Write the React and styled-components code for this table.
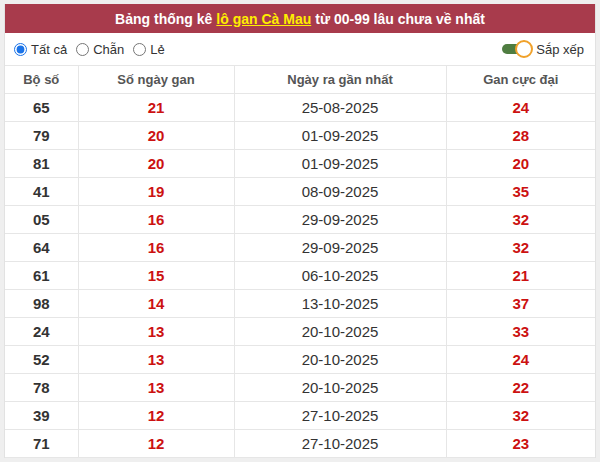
import React from 'react';
import styled, { createGlobalStyle } from 'styled-components';

const GlobalStyle = createGlobalStyle`
  body {
    margin: 0;
    background: #efefef;
    font-family: "Liberation Sans", Arial, sans-serif;
  }
`;

const rows = [
  ['65', 21, '25-08-2025', 24],
  ['79', 20, '01-09-2025', 28],
  ['81', 20, '01-09-2025', 20],
  ['41', 19, '08-09-2025', 35],
  ['05', 16, '29-09-2025', 32],
  ['64', 16, '29-09-2025', 32],
  ['61', 15, '06-10-2025', 21],
  ['98', 14, '13-10-2025', 37],
  ['24', 13, '20-10-2025', 33],
  ['52', 13, '20-10-2025', 24],
  ['78', 13, '20-10-2025', 22],
  ['39', 12, '27-10-2025', 32],
  ['71', 12, '27-10-2025', 23],
];

const Box = styled.div`
  margin: 4px 4px 0;
  background: #fff;
  border: 1px solid #e2e2e2;
  border-top: none;
  border-bottom: none;
`;

const Title = styled.h3`
  margin: 0;
  height: 29px;
  background: #a83b4c;
  color: #fff;
  font-size: 14px;
  font-weight: bold;
  display: flex;
  align-items: center;
  justify-content: center;
  gap: 4px;
  a {
    color: #ffee00;
    text-decoration: underline;
  }
`;

const Options = styled.div`
  height: 32px;
  display: flex;
  align-items: center;
  justify-content: space-between;
  padding: 0 10px 0 9px;
  font-size: 13px;
  color: #333;
`;

const RadioGroup = styled.div`
  display: flex;
  align-items: center;
  gap: 9px;
`;

const RadioLabel = styled.label`
  display: flex;
  align-items: center;
  gap: 4px;
  input {
    margin: 0;
    width: 13px;
    height: 13px;
    accent-color: #1a73e8;
  }
`;

const ToggleWrap = styled.div`
  display: flex;
  align-items: center;
  gap: 4px;
  margin-right: 1px;
`;

const Track = styled.span`
  position: relative;
  display: inline-block;
  width: 24px;
  height: 10px;
  border-radius: 5px;
  background: #4f7d41;
  margin-right: 6px;
`;

const Knob = styled.span`
  position: absolute;
  right: -7px;
  top: -4px;
  width: 14px;
  height: 14px;
  border-radius: 50%;
  background: #fff;
  border: 2px solid #f0a12a;
`;

const Table = styled.table`
  width: 100%;
  border-collapse: collapse;
  font-size: 15px;
  color: #333;
  th, td {
    border: 1px solid #e6e6e6;
    text-align: center;
    height: 27px;
    padding: 0;
  }
  tr > :first-child { border-left: none; }
  tr > :last-child { border-right: none; }
  th {
    font-size: 13px;
    font-weight: bold;
    color: #555;
  }
`;

const Cell = styled.td`
  font-weight: ${(p) => (p.$bold ? 'bold' : 'normal')};
  color: ${(p) => (p.$red ? '#cc1111' : '#333')};
`;

export default function App() {
  return (
    <>
      <GlobalStyle />
      <Box>
        <Title>
          Bảng thống kê <a>lô gan Cà Mau</a> từ 00-99 lâu chưa về nhất
        </Title>
        <Options>
          <RadioGroup>
            <RadioLabel><input type="radio" name="f" defaultChecked /> Tất cả</RadioLabel>
            <RadioLabel><input type="radio" name="f" /> Chẵn</RadioLabel>
            <RadioLabel><input type="radio" name="f" /> Lẻ</RadioLabel>
          </RadioGroup>
          <ToggleWrap>
            <Track><Knob /></Track>
            Sắp xếp
          </ToggleWrap>
        </Options>
        <Table>
          <colgroup>
            <col style={{ width: 73 }} />
            <col style={{ width: 156 }} />
            <col style={{ width: 212 }} />
            <col />
          </colgroup>
          <thead>
            <tr>
              <th>Bộ số</th>
              <th>Số ngày gan</th>
              <th>Ngày ra gần nhất</th>
              <th>Gan cực đại</th>
            </tr>
          </thead>
          <tbody>
            {rows.map(([n, gan, date, max]) => (
              <tr key={n}>
                <Cell $bold>{n}</Cell>
                <Cell $bold $red>{gan}</Cell>
                <Cell>{date}</Cell>
                <Cell $bold $red>{max}</Cell>
              </tr>
            ))}
          </tbody>
        </Table>
      </Box>
    </>
  );
}
